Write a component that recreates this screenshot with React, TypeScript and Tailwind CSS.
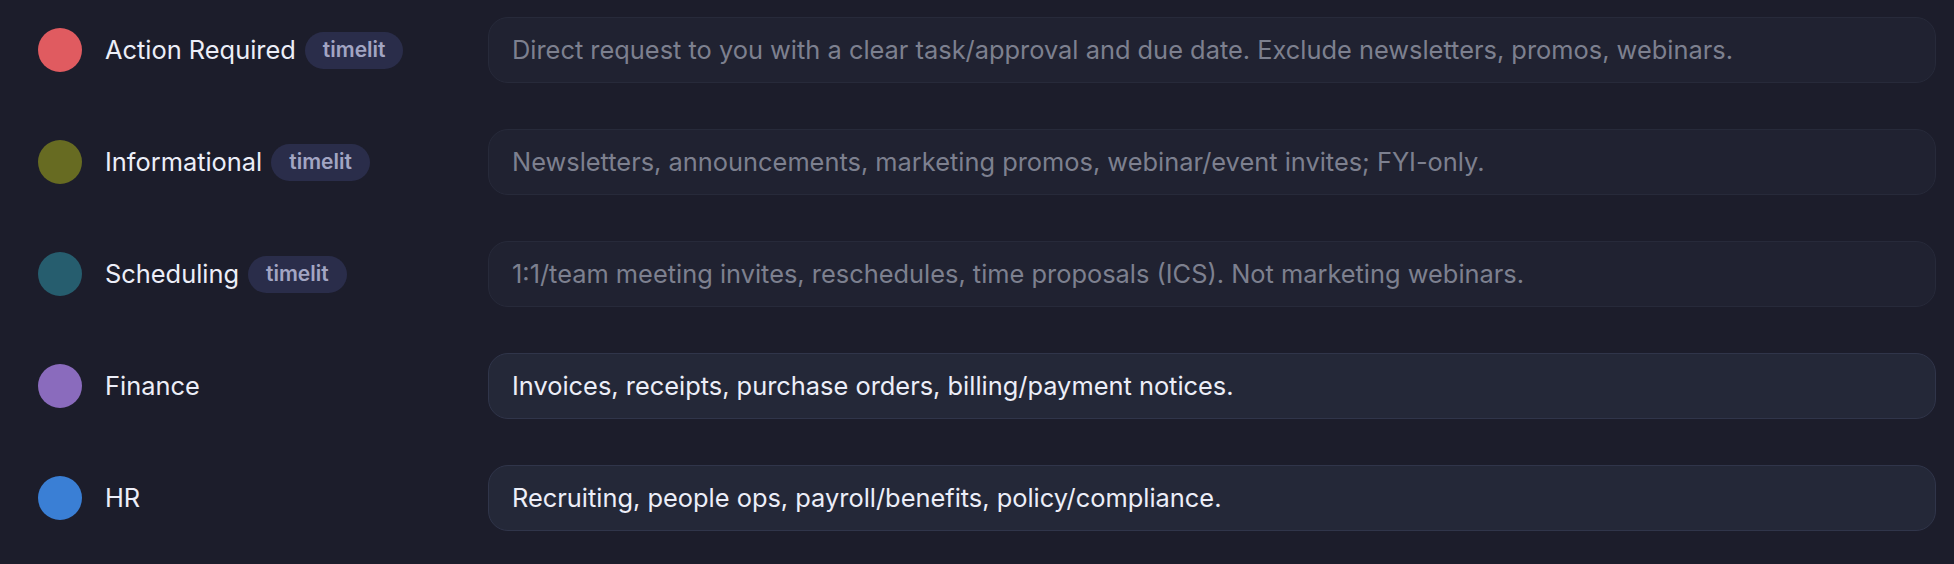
const categories = [
	{
		name: 'Action Required',
		color: 'bg-[#e05b60]',
		tag: true,
		text: 'Direct request to you with a clear task/approval and due date. Exclude newsletters, promos, webinars.',
		filled: false,
	},
	{
		name: 'Informational',
		color: 'bg-[#676b22]',
		tag: true,
		text: 'Newsletters, announcements, marketing promos, webinar/event invites; FYI-only.',
		filled: false,
	},
	{
		name: 'Scheduling',
		color: 'bg-[#265d6e]',
		tag: true,
		text: '1:1/team meeting invites, reschedules, time proposals (ICS). Not marketing webinars.',
		filled: false,
	},
	{
		name: 'Finance',
		color: 'bg-[#8a6bbd]',
		tag: false,
		text: 'Invoices, receipts, purchase orders, billing/payment notices.',
		filled: true,
	},
	{
		name: 'HR',
		color: 'bg-[#3a7fd5]',
		tag: false,
		text: 'Recruiting, people ops, payroll/benefits, policy/compliance.',
		filled: true,
	},
];

export default function App() {
	return (
		<div
			className="flex min-h-[564px] w-full flex-col gap-[46px] bg-[#1c1d2b] pl-[38px] pr-[18px] pt-[17px]"
			style={{ fontFamily: 'Inter, "Noto Sans", sans-serif' }}
		>
			{categories.map((category) => (
				<div key={category.name} className="flex h-[66px] items-center">
					<div className="flex w-[450px] shrink-0 items-center">
						<span className={`size-[44px] shrink-0 rounded-full ${category.color}`} />
						<span className="ml-[23px] text-[25.4px] text-[#eceef8]">{category.name}</span>
						{category.tag && (
							<span className="ml-[9px] flex h-[37px] items-center rounded-full bg-[#2a2d4a] px-[18px] text-[21px] font-semibold text-[#a2a5c3]">
								timelit
							</span>
						)}
					</div>
					<div
						className={
							category.filled
								? 'flex h-[66px] flex-1 items-center rounded-[20px] border border-[#30354a] bg-[#242838] px-[23px] text-[25.4px] text-[#eceef8]'
								: 'flex h-[66px] flex-1 items-center rounded-[20px] border border-[#272a3a] bg-[#202231] px-[23px] text-[25.4px] text-[#7d808f]'
						}
					>
						{category.text}
					</div>
				</div>
			))}
		</div>
	);
}
